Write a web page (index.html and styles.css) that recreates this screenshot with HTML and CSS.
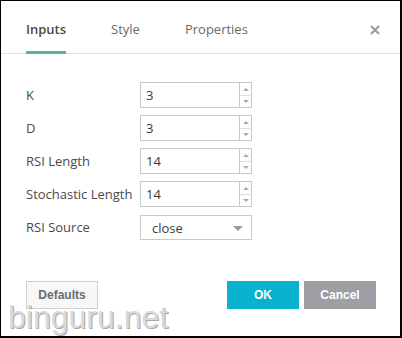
FILE: index.html
```html
<!DOCTYPE html>
<html lang="en">
<head>
    <meta charset="UTF-8">
    <title>Stoch RSI</title>
    <link rel="stylesheet" href="styles.css">
</head>
<body>
    <div class="dialog">
        <div class="tabs">
            <span class="tab active">Inputs</span>
            <span class="tab">Style</span>
            <span class="tab">Properties</span>
            <span class="close">
                <svg width="10" height="10" viewBox="0 0 10 10"><path d="M1 1L9 9M9 1L1 9" stroke="#9a9a9a" stroke-width="2"/></svg>
            </span>
        </div>

        <div class="form">
            <label>K</label>
            <div class="field"><span class="val">3</span><span class="spin"><i class="up"></i><i class="down"></i></span></div>
            <label>D</label>
            <div class="field"><span class="val">3</span><span class="spin"><i class="up"></i><i class="down"></i></span></div>
            <label>RSI Length</label>
            <div class="field"><span class="val">14</span><span class="spin"><i class="up"></i><i class="down"></i></span></div>
            <label>Stochastic Length</label>
            <div class="field"><span class="val">14</span><span class="spin"><i class="up"></i><i class="down"></i></span></div>
            <label>RSI Source</label>
            <div class="field select"><span class="val">close</span><span class="arrow"></span></div>
        </div>

        <div class="footer">
            <button class="btn defaults">Defaults</button>
            <span class="spacer"></span>
            <button class="btn ok">OK</button>
            <button class="btn cancel">Cancel</button>
        </div>

        <div class="watermark">binguru.net</div>
    </div>
</body>
</html>
```

FILE: styles.css
```css
body {
    margin: 0;
    font-family: "Open Sans", sans-serif;
}

.dialog {
    position: relative;
    width: 402px;
    height: 338px;
    box-sizing: border-box;
    border-style: solid;
    border-color: #000;
    border-width: 1px 2px 2px 1px;
    background: #fff;
    overflow: hidden;
}

/* tabs */
.tabs {
    display: flex;
    gap: 45px;
    padding: 19px 0 0 25px;
    border-bottom: 1px solid #e0e0e0;
    position: relative;
}

.tab {
    font-size: 13px;
    line-height: 19px;
    color: #6a6a6a;
    padding-bottom: 12px;
    border-bottom: 3px solid transparent;
    margin-bottom: -1px;
}

.tab.active {
    font-weight: 600;
    color: #4a4a4a;
    border-bottom-color: #5bb68a;
}

.close {
    position: absolute;
    right: 20px;
    top: 17px;
}

/* rows */
.form {
    display: grid;
    grid-template-columns: 114px 112px;
    row-gap: 7px;
    padding: 28px 0 0 25px;
    align-items: center;
}

.form label {
    font-size: 13px;
    color: #4a4a4a;
}

.field {
    position: relative;
    height: 26px;
    box-sizing: border-box;
    border: 1px solid #c8c8c8;
    display: flex;
    align-items: center;
}

.val {
    font-size: 13px;
    color: #3a3a3a;
    padding-left: 5px;
}

.spin {
    position: absolute;
    right: 0;
    top: 0;
    bottom: 0;
    width: 11px;
    border-left: 1px solid #c8c8c8;
    display: flex;
    flex-direction: column;
}

.spin i {
    flex: 1;
    position: relative;
}

.spin i.up {
    border-bottom: 1px solid #dcdcdc;
}

.spin i::after {
    content: "";
    position: absolute;
    left: 3px;
    top: 5px;
    border-left: 3px solid transparent;
    border-right: 3px solid transparent;
}

.spin i.up::after {
    border-bottom: 3px solid #aaa;
}

.spin i.down::after {
    top: 4px;
    border-top: 3px solid #aaa;
}

.select {
    height: 25px;
    margin-top: 1px;
}

.select .val {
    padding-left: 11px;
}

.arrow {
    position: absolute;
    right: 8px;
    top: 10px;
    border-left: 5px solid transparent;
    border-right: 5px solid transparent;
    border-top: 5px solid #999;
}

/* buttons */
.footer {
    display: flex;
    gap: 5px;
    padding: 41px 24px 0 25px;
}

.spacer {
    flex: 1;
}

.btn {
    width: 72px;
    height: 28px;
    font-family: "Liberation Sans", Arial, sans-serif;
    font-size: 12px;
    font-weight: bold;
    border: 1px solid transparent;
    color: #fff;
    padding: 0;
}

.defaults {
    background: #f7f7f7;
    border-color: #cfcfcf;
    color: #6b6b6b;
}

.ok {
    background: #09b3cd;
}

.cancel {
    background: #9d9fa5;
}

.watermark {
    position: absolute;
    left: 7px;
    top: 298px;
    font-family: "Liberation Sans", Arial, sans-serif;
    font-size: 32px;
    color: #d9d9d9;
    text-shadow: 1px 1px 0 #a8a8a8;
}
```
